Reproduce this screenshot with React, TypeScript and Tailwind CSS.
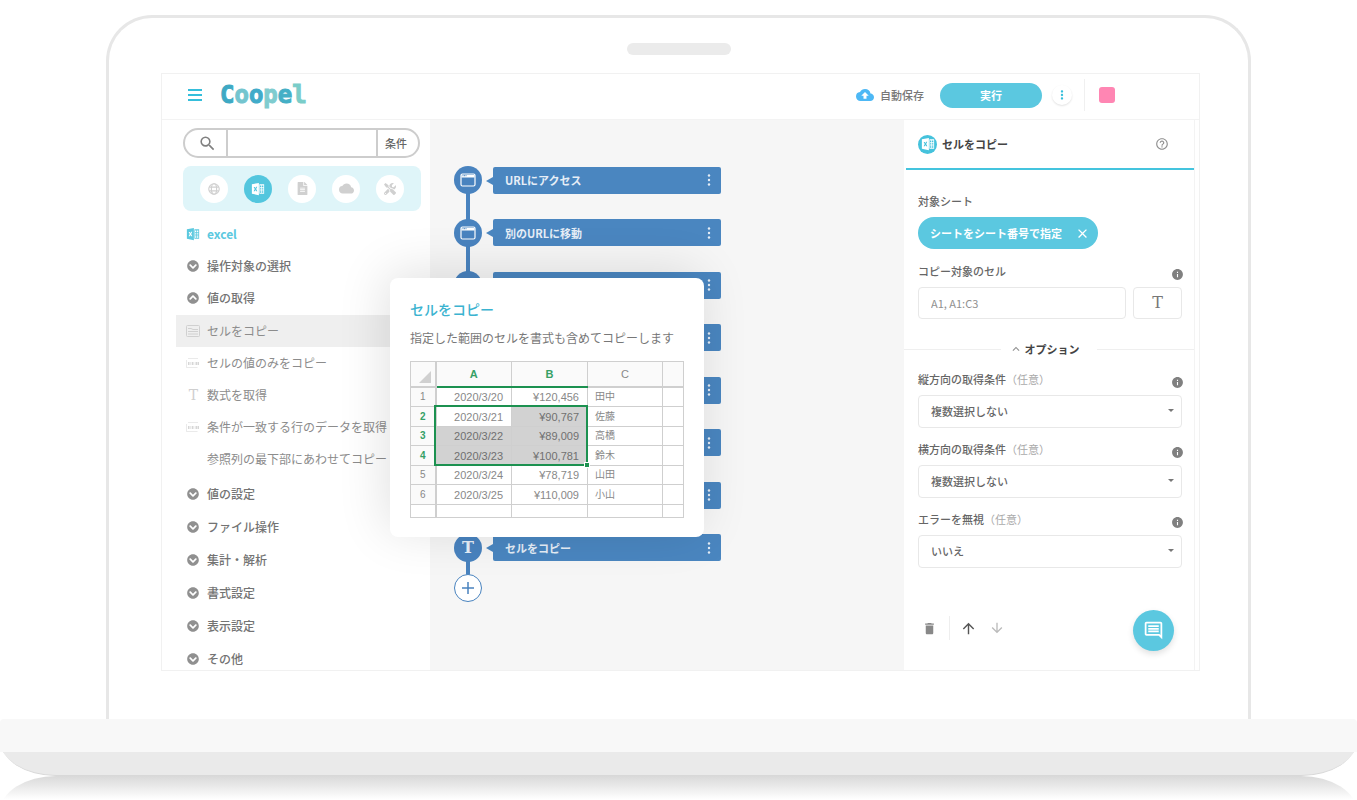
import React from 'react';
import {
  MdArrowDownward,
  MdArrowUpward,
  MdClose,
  MdCloud,
  MdCloudUpload,
  MdDelete,
  MdExpandLess,
  MdHelpOutline,
  MdInfo,
  MdMoreVert,
  MdOutlineInsertComment,
  MdSearch,
} from 'react-icons/md';
import { FaChevronCircleDown, FaChevronCircleUp, FaFileAlt, FaTools } from 'react-icons/fa';

const LOGO_LETTERS = [
  { char: 'C', color: 'text-[#3ea9c4]' },
  { char: 'o', color: 'text-[#74c5cf]' },
  { char: 'o', color: 'text-[#41abc9]' },
  { char: 'p', color: 'text-[#7fcccf]' },
  { char: 'e', color: 'text-[#45afc6]' },
  { char: 'l', color: 'text-[#7acdc9]' },
];

const ACTIONS = [
  { label: 'セルをコピー', icon: 'sheet', active: true },
  { label: 'セルの値のみをコピー', icon: 'value', active: false },
  { label: '数式を取得', icon: 'text', active: false },
  { label: '条件が一致する行のデータを取得', icon: 'value', active: false },
  { label: '参照列の最下部にあわせてコピー', icon: 'none', active: false },
];

const CLOSED_GROUPS = ['値の設定', 'ファイル操作', '集計・解析', '書式設定', '表示設定', 'その他'];

const STEPS = [
  { label: 'URLにアクセス', type: 'window' },
  { label: '別のURLに移動', type: 'window' },
  { label: '', type: 'window' },
  { label: '', type: 'window' },
  { label: '', type: 'window' },
  { label: '', type: 'window' },
  { label: '', type: 'window' },
  { label: 'セルをコピー', type: 'text' },
];

const SHEET_ROWS = [
  { date: '2020/3/20', price: '¥120,456', name: '田中' },
  { date: '2020/3/21', price: '¥90,767', name: '佐藤' },
  { date: '2020/3/22', price: '¥89,009', name: '高橋' },
  { date: '2020/3/23', price: '¥100,781', name: '鈴木' },
  { date: '2020/3/24', price: '¥78,719', name: '山田' },
  { date: '2020/3/25', price: '¥110,009', name: '小山' },
];

const OPTIONS = [
  { id: 'vertical', label: '縦方向の取得条件', value: '複数選択しない' },
  { id: 'horizontal', label: '横方向の取得条件', value: '複数選択しない' },
  { id: 'ignore-error', label: 'エラーを無視', value: 'いいえ' },
];

const ExcelIcon: React.FC<{ className?: string }> = ({ className }) => (
  <svg viewBox="0 0 16 16" className={className} aria-hidden="true">
    <path
      fill="currentColor"
      fillRule="evenodd"
      d="M1 2.6 9 1v14l-8-1.6V2.6Zm2 3 1.3 2.4L3 10.5h1.4l.7-1.5.8 1.6h1.4L5.9 8l1.3-2.6H5.8L5.1 7l-.7-1.4H3Z"
    />
    <path
      fill="currentColor"
      fillRule="evenodd"
      d="M9.6 2.5H15v11H9.6v-11Zm.7 1.5v1.6h1.5V4h-1.5Zm2.3 0v1.6h1.5V4h-1.5Zm-2.3 2.7v1h1.5v-1h-1.5Zm2.3 0v1h1.5v-1h-1.5Zm-2.3 2v1h1.5v-1h-1.5Zm2.3 0v1h1.5v-1h-1.5Zm-2.3 2v1.5h1.5v-1.5h-1.5Zm2.3 0v1.5h1.5v-1.5h-1.5Z"
    />
  </svg>
);

const GlobeIcon = () => (
  <svg viewBox="0 0 16 16" className="size-3.5" fill="none" stroke="currentColor" strokeWidth="1.3" aria-hidden="true">
    <circle cx="8" cy="8" r="6" />
    <ellipse cx="8" cy="8" rx="3" ry="6" />
    <path d="M2.6 5.8h10.8M2.6 10.2h10.8" />
  </svg>
);

const WindowIcon = () => (
  <svg viewBox="0 0 16 14" className="h-3.5 w-4" fill="none" stroke="currentColor" aria-hidden="true">
    <rect x="1" y="1" width="14" height="12" rx="1.5" strokeWidth="1.2" />
    <path d="M1.5 3.2h13" strokeWidth="2.6" />
    <path d="M2.5 2.7h4" stroke="#4983bf" strokeWidth="1" strokeDasharray="1 .5" />
  </svg>
);

const ActionIcon: React.FC<{ type: string }> = ({ type }) => {
  if (type === 'sheet') {
    return (
      <svg viewBox="0 0 14 12" className="h-3 w-3.5" fill="none" stroke="#d0d0d0" aria-hidden="true">
        <rect x=".5" y=".5" width="13" height="11" rx="1" />
        <path d="M2 3.5h3l2 1h5M2 6.5h10M2 9h10" />
      </svg>
    );
  }
  if (type === 'value') {
    return (
      <svg viewBox="0 0 14 12" className="h-3 w-3.5" fill="none" stroke="#d6d6d6" aria-hidden="true">
        <path d="M.5 3v7.5h11M2 1.5h10" strokeOpacity=".5" />
        <path d="M2 6.5h2.5M5.7 6.5h2.5M9.5 6.5h4" strokeWidth="3" strokeDasharray="1.5 .5" />
      </svg>
    );
  }
  if (type === 'text') {
    return <span className="w-3.5 pl-px font-['DejaVu_Serif'] text-sm leading-none text-[#cfcfcf]">T</span>;
  }
  return <span className="w-3.5" />;
};

const Header = () => (
  <header className="flex h-[46px] items-center border-b border-[#f3f3f3] pr-[84px] pb-[3px] pl-[26px]">
    <button type="button" aria-label="メニュー" className="flex w-3.5 flex-col gap-[3px]">
      <span className="h-0.5 bg-[#35bedb]" />
      <span className="h-0.5 bg-[#35bedb]" />
      <span className="h-0.5 bg-[#35bedb]" />
    </button>
    <h1 className="ml-[18px] pb-px font-['DejaVu_Sans_Mono'] text-2xl leading-none font-bold [-webkit-text-stroke:1px]">
      {LOGO_LETTERS.map((letter, i) => (
        <span key={i} className={letter.color}>{letter.char}</span>
      ))}
    </h1>

    <div className="ml-auto flex items-center">
      <MdCloudUpload size={18} className="text-[#4db8f5]" />
      <span className="ml-1.5 text-[11px] font-medium text-[#777]">自動保存</span>
      <button type="button" className="ml-4 h-[25px] w-[102px] rounded-full bg-[#5bc8e0] text-[11px] font-bold text-white">
        実行
      </button>
      <button
        type="button"
        aria-label="その他の操作"
        className="ml-2.5 flex size-5 items-center justify-center rounded-full bg-white shadow-[0_1px_2px_rgba(0,0,0,0.12)]"
      >
        <MdMoreVert size={14} className="text-[#35bedb]" />
      </button>
      <span className="ml-3 h-8 w-px bg-[#f0f0f0]" />
      <span className="ml-3.5 size-4 rounded-[3px] bg-[#ff86b3]" />
    </div>
  </header>
);

const Sidebar = () => (
  <aside className="w-[268px] shrink-0 bg-white pt-2 pb-px">
    <div className="mr-2.5 ml-[21px] flex h-[30px] overflow-hidden rounded-full border-2 border-[#cdcdcd]">
      <button type="button" aria-label="検索" className="flex w-[43px] items-center justify-center border-r-2 border-[#cdcdcd] pl-1">
        <MdSearch size={19} className="text-[#808080]" />
      </button>
      <input type="text" aria-label="キーワード" className="min-w-0 flex-1 px-2 text-xs outline-none" />
      <button type="button" className="w-[42px] border-l-2 border-[#cdcdcd] pr-1 text-[11px] font-medium text-[#666]">
        条件
      </button>
    </div>

    <div className="mt-2 mr-[9px] ml-[21px] flex h-[45px] items-center justify-center gap-4 rounded-lg bg-[#dff5f9] text-[#d0d0d0]">
      <button type="button" aria-label="ブラウザ" className="flex size-7 items-center justify-center rounded-full bg-white">
        <GlobeIcon />
      </button>
      <button type="button" aria-label="エクセル" className="flex size-7 items-center justify-center rounded-full bg-[#53c6de]">
        <ExcelIcon className="size-3.5 text-white" />
      </button>
      <button type="button" aria-label="ファイル" className="flex size-7 items-center justify-center rounded-full bg-white">
        <FaFileAlt size={13} />
      </button>
      <button type="button" aria-label="クラウド" className="flex size-7 items-center justify-center rounded-full bg-white">
        <MdCloud size={15} />
      </button>
      <button type="button" aria-label="ツール" className="flex size-7 items-center justify-center rounded-full bg-white">
        <FaTools size={12} />
      </button>
    </div>

    <nav className="mt-[13px] text-xs text-[#737373]">
      <h2 className="flex h-5 items-center gap-[7px] pl-6 font-bold text-[#5cc9df]">
        <ExcelIcon className="size-3.5" />
        excel
      </h2>
      <button type="button" className="mt-3 flex h-5 w-full items-center gap-2 pl-[25px] font-medium">
        <FaChevronCircleDown size={12} className="text-[#909090]" />
        操作対象の選択
      </button>
      <button type="button" className="mt-3 flex h-5 w-full items-center gap-2 pl-[25px] font-medium">
        <FaChevronCircleUp size={12} className="text-[#909090]" />
        値の取得
      </button>

      <ul className="mt-[7px] mb-[9px] ml-3.5">
        {ACTIONS.map((action) => (
          <li key={action.label}>
            <button
              type="button"
              className={`flex h-8 w-full items-center gap-[7px] pl-2.5 whitespace-nowrap text-[#8c8c8c] ${action.active ? 'bg-[#efefef]' : ''}`}
            >
              <ActionIcon type={action.icon} />
              {action.label}
            </button>
          </li>
        ))}
      </ul>

      <div className="flex flex-col gap-[13px]">
        {CLOSED_GROUPS.map((group) => (
          <button key={group} type="button" className="flex h-5 items-center gap-2 pl-[25px] font-medium">
            <FaChevronCircleDown size={12} className="text-[#909090]" />
            {group}
          </button>
        ))}
      </div>
    </nav>
  </aside>
);

const Flow = () => (
  <main className="flex-1 bg-[#f6f6f6] pt-[34px] pl-6">
    <div className="relative">
      {/* Connector behind the step circles */}
      <span className="absolute top-6 bottom-6 left-3 w-1 bg-[#4983bf]" />
      <ol className="grid h-[420px] auto-rows-fr">
        {STEPS.map((step, i) => (
          <li key={i} className="relative flex items-center gap-[11px]">
            <span className="flex size-7 items-center justify-center rounded-full bg-[#4983bf] text-white">
              {step.type === 'window' ? (
                <WindowIcon />
              ) : (
                <span className="font-['DejaVu_Serif'] text-base leading-none font-bold text-[#e6eef7]">T</span>
              )}
            </span>
            <div className="relative flex h-[27px] w-[228px] items-center justify-between rounded-xs bg-[#4a86c0] pr-1 pl-3 text-[11px] font-bold text-[#e6eef7]">
              <svg viewBox="0 0 7 8" className="absolute top-2.5 -left-[7px] h-2 w-[7px]" aria-hidden="true">
                <path d="M0 4 7 0v8Z" fill="#4a86c0" />
              </svg>
              <span>{step.label}</span>
              <button type="button" aria-label="ステップの操作">
                <svg viewBox="0 0 16 16" className="size-4" fill="currentColor" aria-hidden="true">
                  <circle cx="8" cy="3.5" r="1.2" />
                  <circle cx="8" cy="8" r="1.2" />
                  <circle cx="8" cy="12.5" r="1.2" />
                </svg>
              </button>
            </div>
          </li>
        ))}
      </ol>
      <button
        type="button"
        aria-label="ステップを追加"
        className="relative flex size-7 items-center justify-center rounded-full border border-[#4983bf] bg-white text-[#4983bf]"
      >
        <svg viewBox="0 0 12 12" className="size-3" stroke="currentColor" strokeWidth="1.5" aria-hidden="true">
          <path d="M6 0v12M0 6h12" />
        </svg>
      </button>
    </div>
  </main>
);

const SheetPreview = () => (
  <div className="relative mt-[13px] w-[274px]">
    <table className="h-[157px] w-full table-fixed border-collapse border border-[#cfcfcf] font-['Liberation_Sans','Noto_Sans_CJK_JP',sans-serif] text-[11px] leading-3 text-[#888]">
      <colgroup>
        <col className="w-[25px]" />
        <col className="w-[76px]" />
        <col className="w-[76px]" />
        <col className="w-[75px]" />
        <col />
      </colgroup>
      <thead>
        <tr className="h-[25px] bg-[#fafafa]">
          <td className="border-r-2 border-b-2 border-[#cfcfcf] p-0">
            <svg viewBox="0 0 12 12" className="mt-1.5 ml-2 size-3" aria-hidden="true">
              <path d="M12 0v12H0Z" fill="#d0d0d0" />
            </svg>
          </td>
          <th className="border-r border-b-2 border-r-[#cfcfcf] border-b-[#1c9150] font-bold text-[#36a066]">A</th>
          <th className="border-r border-b-2 border-r-[#cfcfcf] border-b-[#1c9150] font-bold text-[#36a066]">B</th>
          <th className="border-r border-b-2 border-[#cfcfcf] font-normal">C</th>
          <td className="border-b-2 border-[#cfcfcf]" />
        </tr>
      </thead>
      <tbody>
        {SHEET_ROWS.map((row, i) => {
          const selected = i >= 1 && i <= 3;
          return (
            <tr key={row.date} className="border-b border-[#cfcfcf]">
              <th className={`border-r-2 border-[#cfcfcf] bg-[#fafafa] p-0 text-[10px] ${selected ? 'font-bold text-[#36a066]' : 'font-normal'}`}>
                {i + 1}
              </th>
              <td className={`border-r border-[#cfcfcf] p-0 pr-2 text-right ${selected && i > 1 ? 'bg-[#d2d2d2] text-[#707070]' : ''}`}>
                {row.date}
              </td>
              <td className={`border-r border-[#cfcfcf] p-0 pr-2 text-right ${selected ? 'bg-[#d2d2d2] text-[#707070]' : ''}`}>
                {row.price}
              </td>
              <td className="border-r border-[#cfcfcf] p-0 pl-[7px] text-[10px]">{row.name}</td>
              <td className="p-0" />
            </tr>
          );
        })}
        <tr className="h-[13px]">
          <td className="border-r-2 border-[#cfcfcf] p-0" />
          <td className="border-r border-[#cfcfcf] p-0" />
          <td className="border-r border-[#cfcfcf] p-0" />
          <td className="border-r border-[#cfcfcf] p-0" />
          <td className="p-0" />
        </tr>
      </tbody>
    </table>
    {/* Range selection A2:B4 with its fill handle */}
    <div className="absolute top-11 left-6 h-[61px] w-[154px] border-2 border-[#1c9150]">
      <span className="absolute -right-1 -bottom-1 size-1.5 border border-white bg-[#1c9150]" />
    </div>
  </div>
);

const HelpPopup = () => (
  <section className="absolute top-[158px] left-[228px] z-10 w-[314px] rounded-lg bg-white px-5 pt-[19px] pb-[19px] shadow-[-4px_-6px_50px_rgba(0,0,0,0.12)]">
    <h3 className="text-sm leading-6 font-medium text-[#3bb3d0]">セルをコピー</h3>
    <p className="mt-[7px] text-xs leading-5 whitespace-nowrap text-[#777]">指定した範囲のセルを書式も含めてコピーします</p>
    <SheetPreview />
  </section>
);

const InfoButton = () => (
  <button type="button" aria-label="説明" className="mt-1.5 -mr-0.5">
    <MdInfo size={13} className="text-[#808080]" />
  </button>
);

const SettingsPanel = () => (
  <aside className="mr-1 flex w-[291px] shrink-0 flex-col border-r border-[#f3f3f3] bg-white text-[11px] text-[#666]">
    <div className="ml-0.5 flex h-[50px] items-center border-b-2 border-[#44c4de] pl-3">
      <span className="flex size-[19px] items-center justify-center rounded-full bg-[#45c2dc]">
        <ExcelIcon className="size-3.5 text-white" />
      </span>
      <h2 className="ml-[5px] font-bold text-[#444]">セルをコピー</h2>
      <button type="button" aria-label="ヘルプ" className="mr-[25px] ml-auto">
        <MdHelpOutline size={14} className="text-[#909090]" />
      </button>
    </div>

    <div className="pt-[21px] pr-3 pl-3.5">
      <h3 className="leading-5 font-medium">対象シート</h3>
      <button
        type="button"
        className="mt-1.5 flex h-8 w-[180px] items-center justify-between rounded-full bg-[#5bc8e0] pr-2 pl-3 font-bold text-white"
      >
        シートをシート番号で指定
        <MdClose size={15} />
      </button>

      <div className="mt-3 flex h-5 items-center justify-between">
        <label htmlFor="cells" className="font-medium">コピー対象のセル</label>
        <InfoButton />
      </div>
      <div className="mt-1.5 flex gap-[7px]">
        <input
          id="cells"
          type="text"
          placeholder="A1, A1:C3"
          className="h-8 min-w-0 flex-1 rounded-sm border border-[#e8e8e8] px-3 outline-none placeholder:text-[#909090]"
        />
        <button type="button" aria-label="テキスト" className="h-8 w-[49px] rounded-sm border border-[#e8e8e8] font-['DejaVu_Serif'] text-base text-[#777]">
          T
        </button>
      </div>
    </div>

    <div className="mt-5 flex h-5 items-center">
      <span className="h-px flex-1 bg-[#efefef]" />
      <button type="button" className="flex w-24 items-center justify-center gap-0.5 pr-2.5 font-bold text-[#444]">
        <MdExpandLess size={14} className="text-[#909090]" />
        オプション
      </button>
      <span className="h-px flex-1 bg-[#efefef]" />
    </div>

    <div className="mt-2.5 flex flex-col gap-[11px] pr-3 pl-3.5">
      {OPTIONS.map((option) => (
        <div key={option.id}>
          <div className="flex h-5 items-center justify-between">
            <label htmlFor={option.id} className="font-medium">
              {option.label}
              <span className="font-normal text-[#aaa]">（任意）</span>
            </label>
            <InfoButton />
          </div>
          <div className="relative mt-1.5">
            <select id={option.id} className="block h-[33px] w-full appearance-none rounded-sm border border-[#e8e8e8] bg-white px-3 font-medium outline-none">
              <option>{option.value}</option>
            </select>
            <span className="pointer-events-none absolute top-3.5 right-2 border-x-3 border-t-3 border-x-transparent border-t-[#777]" />
          </div>
        </div>
      ))}
    </div>

    <div className="mt-[42px] flex items-start pr-5 pl-[18px]">
      <div className="flex h-9 items-center">
        <button type="button" aria-label="削除">
          <MdDelete size={15} className="text-[#888]" />
        </button>
        <span className="ml-3 h-6 w-px bg-[#eee]" />
        <button type="button" aria-label="上へ" className="ml-2.5">
          <MdArrowUpward size={17} className="text-[#555]" />
        </button>
        <button type="button" aria-label="下へ" className="ml-3">
          <MdArrowDownward size={16} className="text-[#bbb]" />
        </button>
      </div>
      <button
        type="button"
        aria-label="チャット"
        className="ml-auto flex size-[41px] items-center justify-center rounded-full bg-[#5bc8e0] text-white shadow-[0_3px_6px_rgba(0,0,0,0.12)]"
      >
        <MdOutlineInsertComment size={21} />
      </button>
    </div>
  </aside>
);

export default function App() {
  return (
    <div className="min-h-screen overflow-hidden bg-white font-['Noto_Sans_CJK_JP',sans-serif]">
      {/* Laptop lid */}
      <div className="mx-[106px] mt-[15px] rounded-t-[46px] border-3 border-b-0 border-[#e7e7e7] pt-[25px] pb-12">
        <div className="mx-auto h-3 w-[104px] rounded-full bg-[#ebebeb]" />
        <div className="mt-[18px] mr-12 ml-[52px] border border-[#f1f1f1]">
          <Header />
          <div className="relative flex">
            <Sidebar />
            <Flow />
            <SettingsPanel />
            <HelpPopup />
          </div>
        </div>
      </div>

      {/* Laptop base and the shadow under it */}
      <div className="h-[33px] rounded-t-sm bg-[#f8f8f8]" />
      <div className="flex h-6 items-end overflow-hidden">
        <div className="h-9 flex-1 shrink-0 rounded-b-[56px_36px] border-b border-[#d8d8d8] bg-[#eaeaea]" />
      </div>
      <div className="h-6 overflow-hidden">
        <div className="h-9 rounded-t-[56px_36px] bg-linear-to-b from-[#d9d9d9] to-white to-65%" />
      </div>
    </div>
  );
}
